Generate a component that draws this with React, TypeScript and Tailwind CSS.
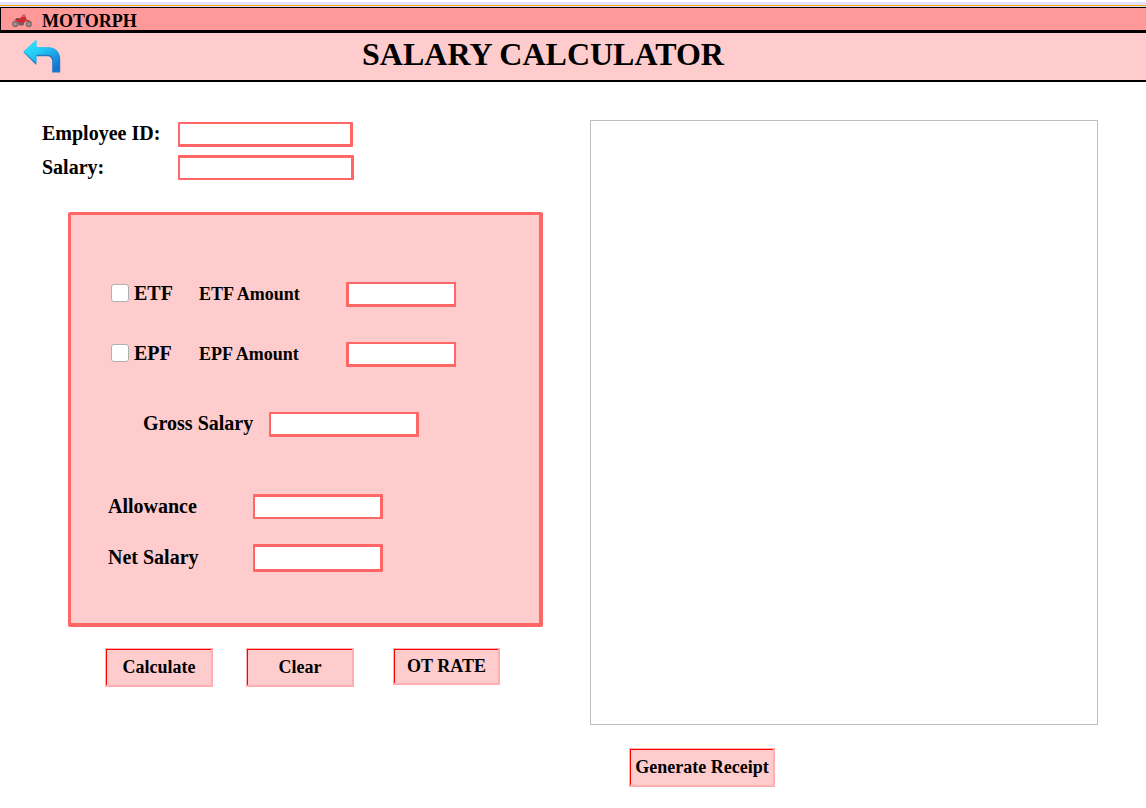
import type { ReactNode } from 'react';

const field = 'border-[#ff6666] bg-white px-1 text-base outline-none rounded-[1px]';

function Field({ id, label, labelClass, inputClass }: { id: string; label: string; labelClass: string; inputClass: string }) {
  return (
    <>
      <label htmlFor={id} className={`shrink-0 whitespace-nowrap ${labelClass}`}>
        {label}
      </label>
      <input id={id} type="text" className={`${field} ${inputClass}`} />
    </>
  );
}

function FundRow({ name }: { name: string }) {
  const key = name.toLowerCase();
  return (
    <div className="flex h-[25px] items-center pl-10">
      <label className="flex w-[88px] items-center gap-[5px] pb-1 text-xl leading-6">
        <input
          type="checkbox"
          className="size-[18px] appearance-none rounded-[3px] border border-[#b0b0b0] bg-white checked:bg-[#ff6666]"
        />
        {name}
      </label>
      <Field
        id={`${key}-amount`}
        label={`${name} Amount`}
        labelClass="w-[147px] pb-[2px] text-lg leading-6"
        inputClass="h-[25px] w-[110px] border-2 border-b-3 border-l-3"
      />
    </div>
  );
}

function BevelButton({ children, className }: { children: ReactNode; className: string }) {
  return (
    <button
      type="button"
      className={`flex border border-r-2 border-b-2 border-[#ffafaf] text-lg leading-6 font-bold whitespace-nowrap ${className}`}
    >
      <span className="flex h-full w-full items-center justify-center border-t border-l border-t-[#ff0000] border-l-[#ff0000] bg-[#fecccc] pb-[2px]">
        {children}
      </span>
    </button>
  );
}

function Motorcycle() {
  return (
    <svg viewBox="0 0 20 14" className="mt-[3px] h-[14px] w-5" aria-hidden="true">
      <g fill="#b58f8f" stroke="#77706e" strokeWidth="1.5">
        <circle cx="3.2" cy="10" r="2.4" />
        <circle cx="16.8" cy="10" r="2.4" />
      </g>
      <path d="M12.2 1.8 16.6 9.8" stroke="#8b7777" strokeWidth="1.1" />
      <path d="M5.5 8h7l-1 3.6H7z" fill="#6f6262" />
      <path d="M2 5.8 5.5 4.6l2.5.6L9.4 2.4h4l1.3 4-2.6 2.2H7.2L4.6 7.2z" fill="#d9252d" />
      <path d="M14 6.2c2-.6 3.7-.1 4.8 1.3l-2.6.2z" fill="#c9353b" />
      <path d="M10 1.2h3.4" stroke="#a05054" strokeWidth="1" />
      <path d="M4 4.8h4.4" stroke="#534348" strokeWidth="1.1" />
    </svg>
  );
}

function BackArrow() {
  return (
    <svg viewBox="0 0 38 34" className="h-[34px] w-[38px]" aria-hidden="true">
      <defs>
        <linearGradient id="arrow-face" x1="0" y1="0" x2="0.75" y2="1">
          <stop offset="0" stopColor="#36efff" />
          <stop offset="0.45" stopColor="#22c9f5" />
          <stop offset="1" stopColor="#1474d4" />
        </linearGradient>
      </defs>
      <path
        d="M1 13.8 13.2 26v-8.8H24c3.3 0 5.2 2 5.2 5.2V33.5h8V20.2c0-7.2-5-11.8-12-11.8h-12V1.6L.6 12.4z"
        fill="#2478bd"
      />
      <path d="M.5 12.5 13.5.3v8h11.8c7 0 11.5 4.7 11.5 11.8V32h-6.5V21.8c0-4-2.2-6-6-6H13.5v8.4z" fill="url(#arrow-face)" />
    </svg>
  );
}

export default function App() {
  return (
    <div className="min-h-screen bg-white font-['Liberation_Serif',serif] font-bold text-black">
      <div className="mt-[2px] h-[5px] border-b border-[#e0e0ff] bg-[#e0e0ff]">
        <div className="h-1 border-b border-[#ffa500]" />
      </div>
      <header>
        <div className="flex h-[26px] items-center gap-[10px] border-t border-b-3 border-l border-black bg-[#ff9999] pl-[11px]">
          <Motorcycle />
          <span className="pt-[3px] text-lg leading-5">MOTORPH</span>
        </div>
        <div className="grid h-[49px] grid-cols-[1fr_auto_1fr] items-center border-b-2 border-black bg-[#fecccc] pr-[60px]">
          <button type="button" aria-label="Back" className="ml-[23px] w-fit pb-[2px]">
            <BackArrow />
          </button>
          <h1 className="pb-[6px] text-[32px] leading-9">SALARY CALCULATOR</h1>
        </div>
      </header>

      <main className="flex items-start gap-[47px] pt-[38px] pr-12">
        <form className="w-[543px] shrink-0 pt-[2px]">
          <div className="flex flex-col gap-2 pl-[42px]">
            <div className="flex h-[25px] items-center">
              <Field id="employee-id" label="Employee ID:" labelClass="w-[136px] pb-1 text-xl leading-6" inputClass="h-[25px] w-[175px] border-2 border-r-3 border-b-3" />
            </div>
            <div className="flex h-[25px] items-center">
              <Field id="salary" label="Salary:" labelClass="w-[136px] pb-[2px] text-xl leading-6" inputClass="h-[25px] w-[176px] border-2 border-t-3 border-r-3" />
            </div>
          </div>

          <div className="mt-8 ml-[68px] flex h-[415px] flex-col rounded-[2px] border-3 border-r-4 border-b-4 border-[#ff6666] bg-[#fecccc] pt-[67px]">
            <div className="flex flex-col gap-[35px]">
              <FundRow name="ETF" />
              <FundRow name="EPF" />
            </div>
            <div className="mt-[45px] flex h-[25px] items-center pl-[72px]">
              <Field id="gross-salary" label="Gross Salary" labelClass="w-[126px] pb-1 text-xl leading-6" inputClass="h-[25px] w-[150px] border-2 border-r-3 border-b-3" />
            </div>
            <div className="mt-[57px] flex h-[25px] items-center pl-[37px]">
              <Field id="allowance" label="Allowance" labelClass="w-[145px] pb-[2px] text-xl leading-6" inputClass="h-[25px] w-[130px] border-2 border-t-3 border-r-3" />
            </div>
            <div className="mt-[25px] flex h-7 items-center pl-[37px]">
              <Field id="net-salary" label="Net Salary" labelClass="w-[145px] pb-[2px] text-xl leading-6" inputClass="h-7 w-[130px] border-3 border-l-2" />
            </div>
          </div>

          <div className="mt-[21px] flex items-start pl-[105px]">
            <BevelButton className="h-[39px] w-[108px]">Calculate</BevelButton>
            <BevelButton className="ml-[33px] h-[39px] w-[108px]">Clear</BevelButton>
            <BevelButton className="ml-[39px] h-[37px] w-[107px]">OT RATE</BevelButton>
          </div>
        </form>

        <section className="flex min-w-0 flex-1 flex-col">
          <textarea aria-label="Receipt" className="h-[605px] w-full resize-none border border-[#c0c0c0] bg-white p-2 text-base outline-none" />
          <BevelButton className="mt-[23px] ml-[39px] h-[39px] w-[146px]">Generate Receipt</BevelButton>
        </section>
      </main>
    </div>
  );
}
